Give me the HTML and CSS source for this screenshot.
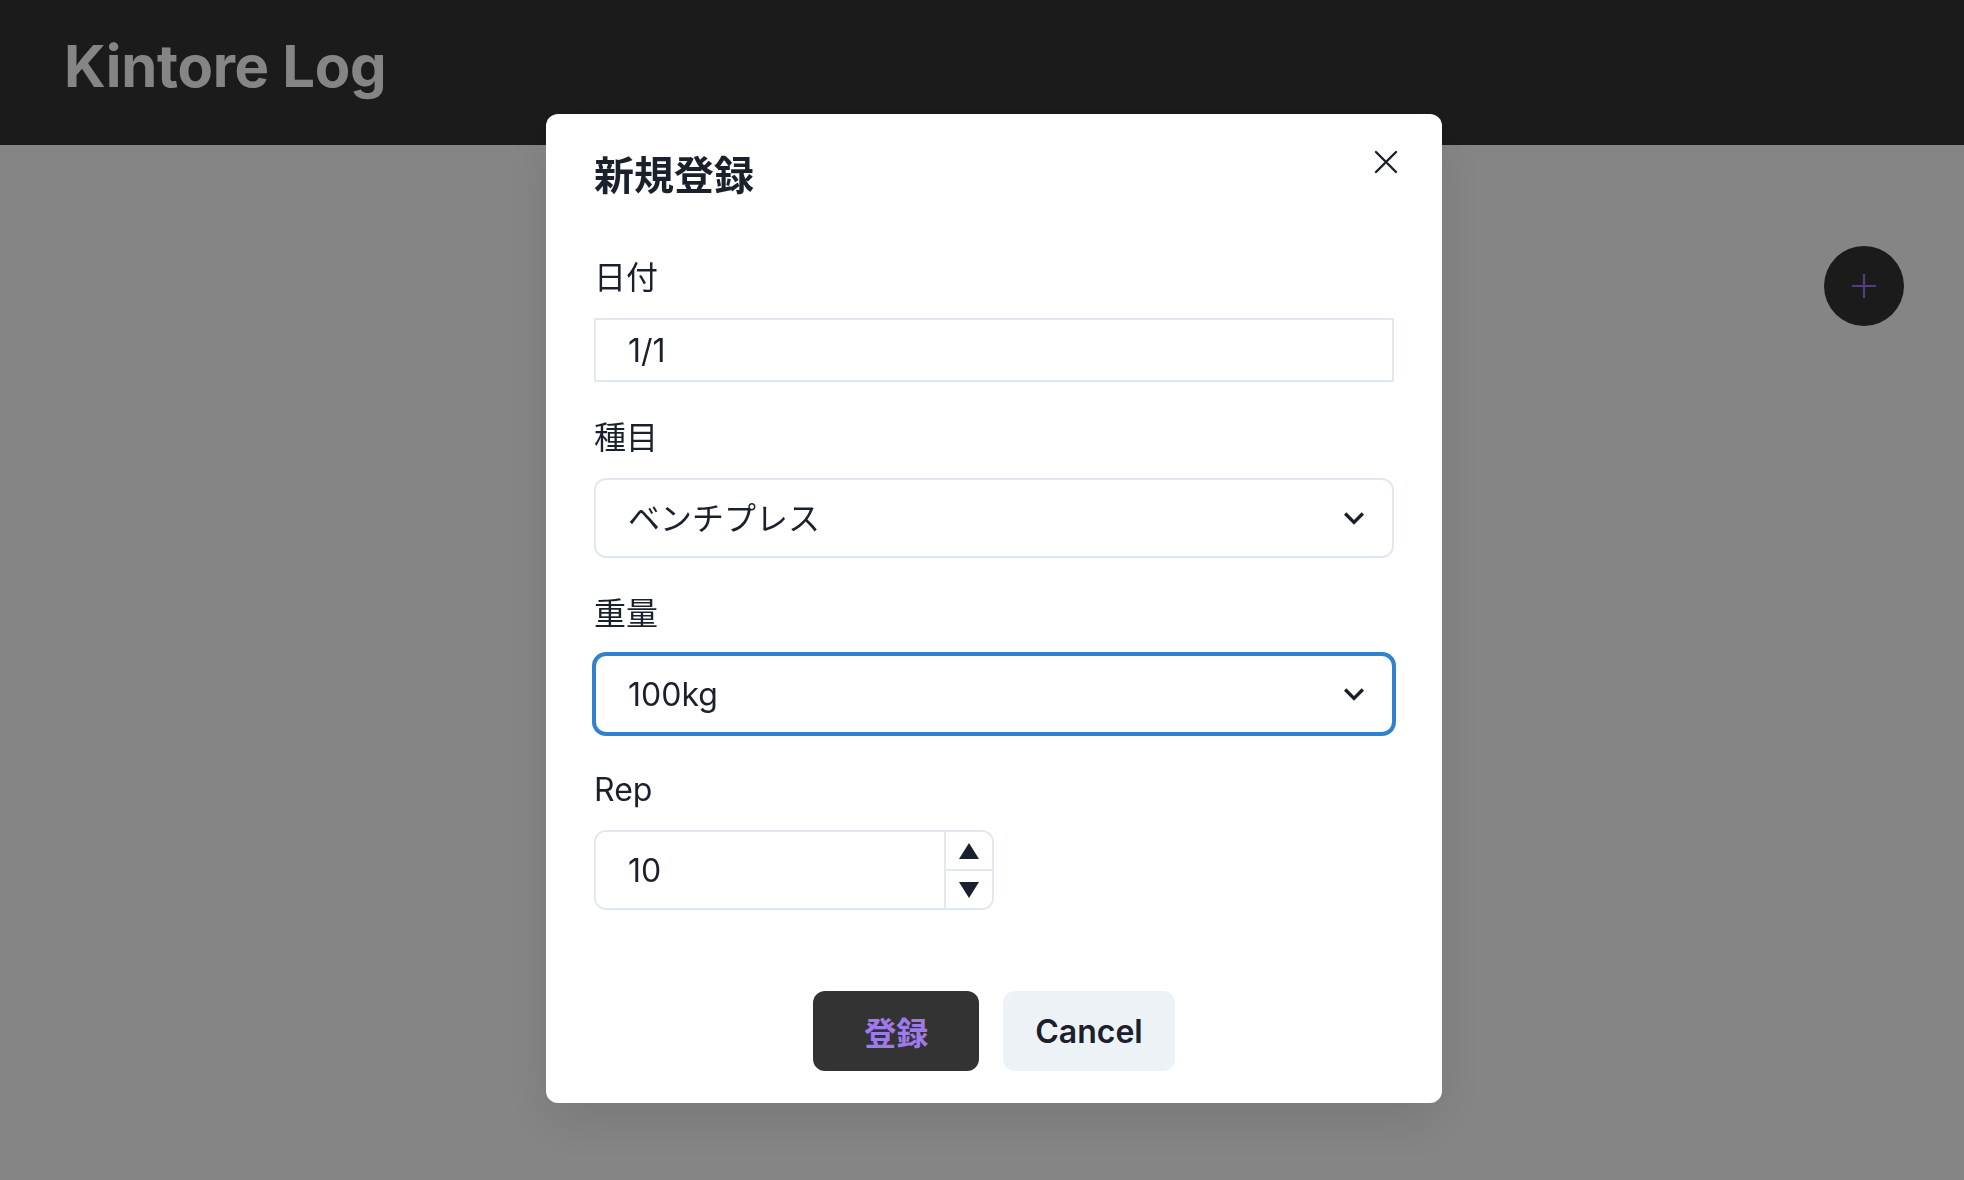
FILE: index.html
```html
<!DOCTYPE html>
<html lang="ja">
<head>
    <meta charset="UTF-8">
    <meta name="viewport" content="width=device-width, initial-scale=1.0">
    <title>Kintore Log</title>
    <link rel="stylesheet" href="styles.css">
</head>
<body>
    <header class="app-header">
        <h1 class="app-title">Kintore Log</h1>
    </header>

    <main class="page">
        <button class="fab" aria-label="新規登録">
            <svg width="26" height="26" viewBox="0 0 26 26">
                <path d="M13 1v24M1 13h24" stroke="#9f7aea" stroke-width="2.2" fill="none"/>
            </svg>
        </button>
    </main>

    <div class="overlay">
        <section class="modal">
            <h2 class="modal-title">新規登録</h2>
            <button class="modal-close" aria-label="Close">
                <svg width="24" height="24" viewBox="0 0 24 24">
                    <path d="M2 2l20 20M22 2L2 22" stroke="#1a202c" stroke-width="2.4" stroke-linecap="round" fill="none"/>
                </svg>
            </button>

            <div class="modal-body">
                <div class="field">
                    <label class="field-label">日付</label>
                    <input class="date-input" type="text" value="1/1">
                </div>

                <div class="field">
                    <label class="field-label">種目</label>
                    <div class="select-wrap">
                        <select class="select">
                            <option>ベンチプレス</option>
                        </select>
                        <svg class="select-icon" width="40" height="40" viewBox="0 0 24 24">
                            <path d="M16.59 8.59L12 13.17 7.41 8.59 6 10l6 6 6-6z" fill="#1a202c"/>
                        </svg>
                    </div>
                </div>

                <div class="field">
                    <label class="field-label">重量</label>
                    <div class="select-wrap">
                        <select class="select select-focused">
                            <option>100kg</option>
                        </select>
                        <svg class="select-icon" width="40" height="40" viewBox="0 0 24 24">
                            <path d="M16.59 8.59L12 13.17 7.41 8.59 6 10l6 6 6-6z" fill="#1a202c"/>
                        </svg>
                    </div>
                </div>

                <div class="field">
                    <label class="field-label">Rep</label>
                    <div class="number-input">
                        <input class="number-field" type="text" value="10">
                        <div class="stepper">
                            <button class="stepper-btn" aria-label="increment">
                                <svg width="20" height="16" viewBox="0 0 20 16">
                                    <path d="M10 0L20 16H0z" fill="#1a202c"/>
                                </svg>
                            </button>
                            <button class="stepper-btn" aria-label="decrement">
                                <svg width="20" height="16" viewBox="0 0 20 16">
                                    <path d="M0 0h20L10 16z" fill="#1a202c"/>
                                </svg>
                            </button>
                        </div>
                    </div>
                </div>
            </div>

            <div class="modal-footer">
                <button class="button button-dark">登録</button>
                <button class="button button-light">Cancel</button>
            </div>
        </section>
    </div>
</body>
</html>
```

FILE: styles.css
```css
* {
    margin: 0;
    padding: 0;
    box-sizing: border-box;
}

body {
    width: 1964px;
    height: 1180px;
    overflow: hidden;
    font-family: Inter, "Noto Sans CJK JP", sans-serif;
    background: #ffffff;
    color: #1a202c;
}

.app-header {
    height: 145px;
    background: #343434;
    display: flex;
    align-items: center;
    padding: 0 64px 12px;
}

.app-title {
    font-size: 58px;
    font-weight: 700;
    line-height: 1.2;
    color: #ffffff;
    letter-spacing: -0.3px;
}

.page {
    display: flex;
    justify-content: flex-end;
    padding: 101px 60px;
}

.fab {
    width: 80px;
    height: 80px;
    border: none;
    border-radius: 50%;
    background: #343434;
    display: flex;
    align-items: center;
    justify-content: center;
}

.overlay {
    position: fixed;
    inset: 0;
    background: rgba(0, 0, 0, 0.48);
    display: flex;
    justify-content: center;
    align-items: flex-start;
    padding-top: 114px;
    padding-left: 24px;
}

.modal {
    position: relative;
    width: 896px;
    background: #ffffff;
    border-radius: 12px;
    box-shadow: 0 20px 50px rgba(0, 0, 0, 0.1);
}

.modal-title {
    padding: 32px 48px;
    font-size: 40px;
    font-weight: 700;
    line-height: 60px;
}

.modal-close {
    position: absolute;
    top: 16px;
    right: 24px;
    width: 64px;
    height: 64px;
    border: none;
    background: transparent;
    display: flex;
    align-items: center;
    justify-content: center;
}

.modal-body {
    padding: 16px 48px 49px;
    display: flex;
    flex-direction: column;
    gap: 32px;
}

.field {
    display: flex;
    flex-direction: column;
}

.field-label {
    font-size: 32px;
    line-height: 48px;
    font-weight: 400;
    margin-bottom: 16px;
}

.date-input {
    height: 64px;
    width: 100%;
    border: 2px solid #e2e8f0;
    padding: 0 32px;
    font-family: inherit;
    font-size: 32px;
    color: #1a202c;
    outline: none;
}

.select-wrap {
    position: relative;
}

.select {
    width: 100%;
    height: 80px;
    border: 2px solid #e2e8f0;
    border-radius: 12px;
    padding: 0 64px 0 32px;
    font-family: inherit;
    font-size: 32px;
    color: #1a202c;
    background: #ffffff;
    appearance: none;
    outline: none;
}

.select-focused {
    border-color: #3182ce;
    box-shadow: 0 0 0 2px #3182ce;
}

.select-icon {
    position: absolute;
    right: 20px;
    top: 20px;
    pointer-events: none;
}

.number-input {
    width: 400px;
    height: 80px;
    border: 2px solid #e2e8f0;
    border-radius: 12px;
    display: flex;
    overflow: hidden;
}

.number-field {
    flex: 1;
    min-width: 0;
    border: none;
    padding: 0 32px;
    font-family: inherit;
    font-size: 32px;
    color: #1a202c;
    outline: none;
}

.stepper {
    width: 48px;
    border-left: 2px solid #e2e8f0;
    display: flex;
    flex-direction: column;
}

.stepper-btn {
    flex: 1;
    border: none;
    background: #ffffff;
    display: flex;
    align-items: center;
    justify-content: center;
}

.stepper-btn + .stepper-btn {
    border-top: 2px solid #e2e8f0;
}

.modal-footer {
    display: flex;
    justify-content: center;
    gap: 24px;
    padding: 32px 48px;
}

.button {
    min-width: 166px;
    height: 80px;
    padding: 0 32px;
    border: none;
    border-radius: 12px;
    font-family: inherit;
    font-size: 32px;
    font-weight: 600;
}

.button-dark {
    background: #333333;
    color: #9f7aea;
}

.button-light {
    background: #edf2f7;
    color: #1a202c;
}
```
